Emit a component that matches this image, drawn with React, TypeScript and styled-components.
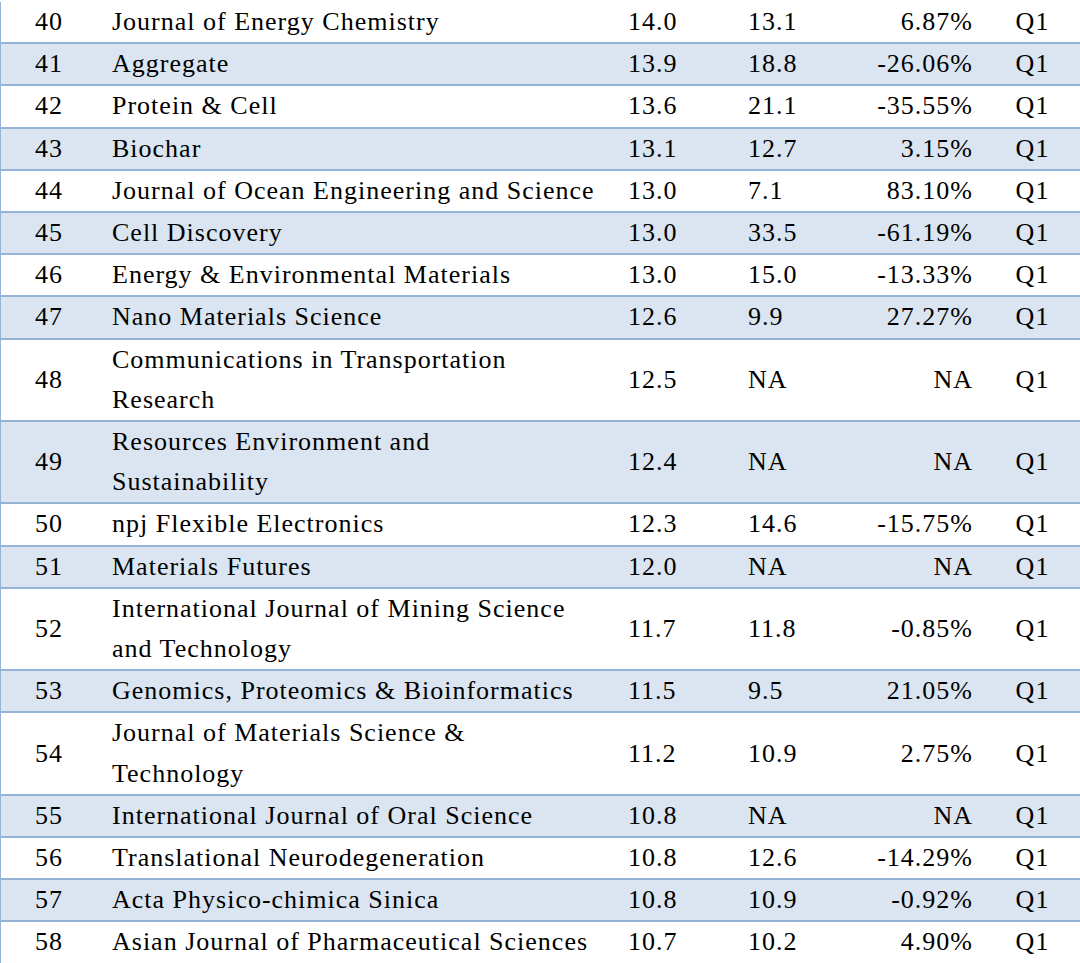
import React from "react";
import styled, { createGlobalStyle } from "styled-components";

const Global = createGlobalStyle`
  html, body { margin: 0; padding: 0; background: #ffffff; }
  body { font-family: "Liberation Serif", "Times New Roman", serif; color: #000; }
`;

type Row = {
  rank: number;
  name: string[];
  jif: string;
  prev: string;
  change: string;
  q: string;
};

const rows: Row[] = [
  { rank: 40, name: ["Journal of Energy Chemistry"], jif: "14.0", prev: "13.1", change: "6.87%", q: "Q1" },
  { rank: 41, name: ["Aggregate"], jif: "13.9", prev: "18.8", change: "-26.06%", q: "Q1" },
  { rank: 42, name: ["Protein & Cell"], jif: "13.6", prev: "21.1", change: "-35.55%", q: "Q1" },
  { rank: 43, name: ["Biochar"], jif: "13.1", prev: "12.7", change: "3.15%", q: "Q1" },
  { rank: 44, name: ["Journal of Ocean Engineering and Science"], jif: "13.0", prev: "7.1", change: "83.10%", q: "Q1" },
  { rank: 45, name: ["Cell Discovery"], jif: "13.0", prev: "33.5", change: "-61.19%", q: "Q1" },
  { rank: 46, name: ["Energy & Environmental Materials"], jif: "13.0", prev: "15.0", change: "-13.33%", q: "Q1" },
  { rank: 47, name: ["Nano Materials Science"], jif: "12.6", prev: "9.9", change: "27.27%", q: "Q1" },
  { rank: 48, name: ["Communications in Transportation", "Research"], jif: "12.5", prev: "NA", change: "NA", q: "Q1" },
  { rank: 49, name: ["Resources Environment and", "Sustainability"], jif: "12.4", prev: "NA", change: "NA", q: "Q1" },
  { rank: 50, name: ["npj Flexible Electronics"], jif: "12.3", prev: "14.6", change: "-15.75%", q: "Q1" },
  { rank: 51, name: ["Materials Futures"], jif: "12.0", prev: "NA", change: "NA", q: "Q1" },
  { rank: 52, name: ["International Journal of Mining Science", "and Technology"], jif: "11.7", prev: "11.8", change: "-0.85%", q: "Q1" },
  { rank: 53, name: ["Genomics, Proteomics & Bioinformatics"], jif: "11.5", prev: "9.5", change: "21.05%", q: "Q1" },
  { rank: 54, name: ["Journal of Materials Science &", "Technology"], jif: "11.2", prev: "10.9", change: "2.75%", q: "Q1" },
  { rank: 55, name: ["International Journal of Oral Science"], jif: "10.8", prev: "NA", change: "NA", q: "Q1" },
  { rank: 56, name: ["Translational Neurodegeneration"], jif: "10.8", prev: "12.6", change: "-14.29%", q: "Q1" },
  { rank: 57, name: ["Acta Physico-chimica Sinica"], jif: "10.8", prev: "10.9", change: "-0.92%", q: "Q1" },
  { rank: 58, name: ["Asian Journal of Pharmaceutical Sciences"], jif: "10.7", prev: "10.2", change: "4.90%", q: "Q1" },
];

const Wrapper = styled.div`
  width: 1080px;
  height: 963px;
  padding-top: 2px;
  box-sizing: border-box;
  overflow: hidden;
`;

const Table = styled.div`
  display: grid;
  grid-template-columns: 96px 520px 120px 120px 129px 95px;
  border-left: 2px solid #95b3d7;
  margin-left: -1px;
  font-size: 26px;
  letter-spacing: 1px;
  line-height: 40.2px;
`;

const Line = styled.div<{ $shaded: boolean }>`
  display: contents;
  & > div {
    background: ${(p) => (p.$shaded ? "#dbe5f1" : "#ffffff")};
    border-bottom: 2px solid #95b3d7;
  }
`;

const Cell = styled.div<{ $align?: "left" | "center" | "right"; $pl?: number; $pr?: number }>`
  display: flex;
  align-items: center;
  justify-content: ${(p) =>
    p.$align === "center" ? "center" : p.$align === "right" ? "flex-end" : "flex-start"};
  padding-left: ${(p) => p.$pl ?? 0}px;
  padding-right: ${(p) => p.$pr ?? 0}px;
  text-align: ${(p) => p.$align ?? "left"};
  white-space: nowrap;
`;

const NameText = styled.span`
  display: block;
`;

export default function App() {
  return (
    <Wrapper>
      <Global />
      <Table>
        {rows.map((r, i) => (
          <Line key={r.rank} $shaded={i % 2 === 1}>
            <Cell $align="center">{r.rank}</Cell>
            <Cell $pl={15} $pr={10}>
              <NameText>
                {r.name.map((part, k) => (
                  <React.Fragment key={k}>
                    {k > 0 && <br />}
                    {part}
                  </React.Fragment>
                ))}
              </NameText>
            </Cell>
            <Cell $pl={11}>{r.jif}</Cell>
            <Cell $pl={11}>{r.prev}</Cell>
            <Cell $align="right" $pr={13}>{r.change}</Cell>
            <Cell $align="center" $pr={2}>{r.q}</Cell>
          </Line>
        ))}
      </Table>
    </Wrapper>
  );
}
